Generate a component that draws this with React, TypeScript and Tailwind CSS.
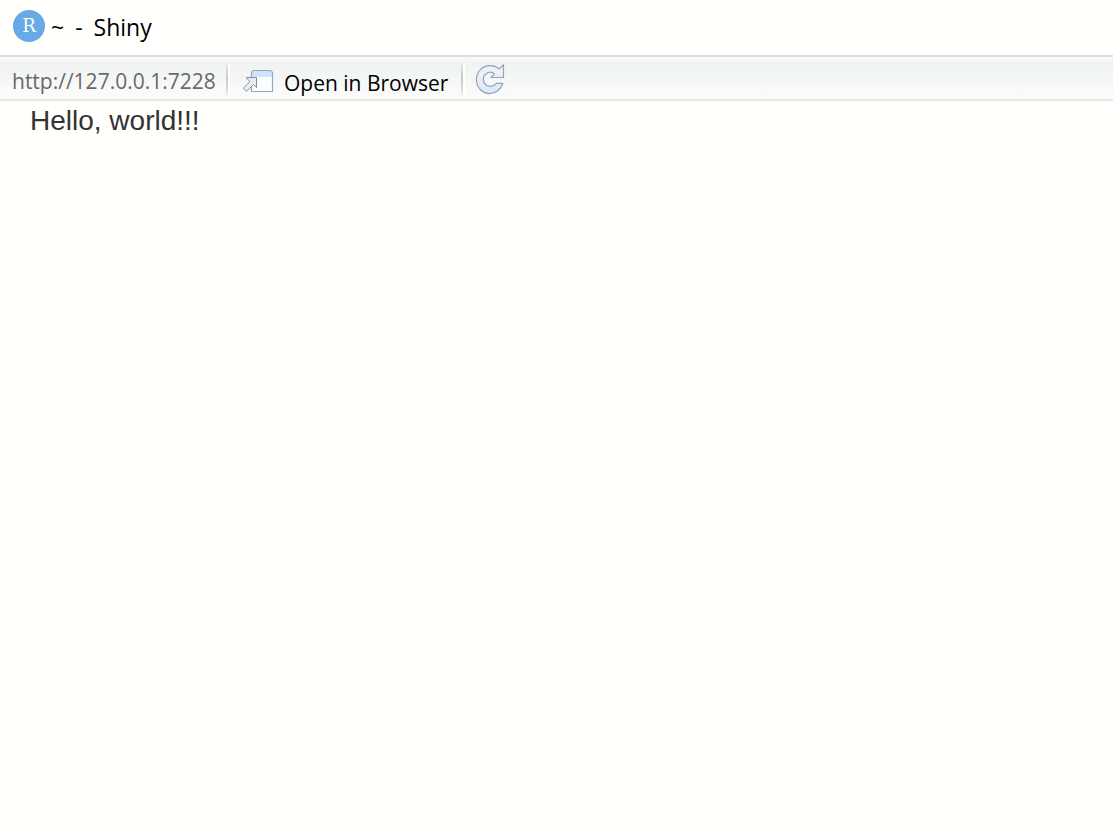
function RLogo() {
  return (
    <span className="flex size-8 items-center justify-center rounded-full bg-[#68a9e6] font-['DejaVu_Serif',serif] text-[18px] leading-8 text-white">
      R
    </span>
  );
}

function OpenWindowIcon() {
  return (
    <svg width="32" height="32" viewBox="0 -6 32 32" fill="none" aria-hidden="true">
      <path d="M9.5 4.5 Q9.5 1.5 12.5 1.5 H27.5 Q30.5 1.5 30.5 4.5 V22.5 H9.5 Z" fill="#fbfcfe" />
      <path d="M10 8 V4.5 Q10 2 12.5 2 H27.5 Q30 2 30 4.5 V8 Z" fill="#cbe5fc" />
      <path
        d="M9.5 22.5 V4.5 Q9.5 1.5 12.5 1.5 H27.5 Q30.5 1.5 30.5 4.5 V22.5 Z"
        stroke="#94aabb"
        strokeWidth="1.2"
      />
      <path
        d="M4.5 8.5 H14.5 V18.5 L11.5 15.5 L4.5 22.3 L1.3 19.2 L8 12.5 L4.5 9.3 Z"
        fill="#eceef4"
        stroke="#858d97"
        strokeLinejoin="round"
      />
    </svg>
  );
}

function RefreshIcon() {
  return (
    <svg width="30" height="32" viewBox="0 0 30 32" fill="none" aria-hidden="true">
      <defs>
        <linearGradient id="refresh-fill" x1="0" y1="0" x2="0" y2="1">
          <stop offset="0" stopColor="#f1f4f8" />
          <stop offset="1" stopColor="#d9e9fb" />
        </linearGradient>
      </defs>
      <path
        d="M28.5 1.8 V14.5 H16 L19.3 10.8 C17 8.9 13.5 8.8 11 10.8 C7.7 13.3 7.5 18.3 10 21 C13 24.5 18.5 24.2 21.3 20.3 H27.9 C26 26.5 20.5 30.7 14.5 30.6 C7 30.3 1.3 24 1.4 16.5 C1.5 8.7 7.5 2.6 15 2.6 C18.5 2.6 21.7 3.9 24.1 5.9 Z"
        fill="url(#refresh-fill)"
        stroke="#98a4b4"
        strokeWidth="1.2"
        strokeLinejoin="round"
      />
    </svg>
  );
}

function Divider() {
  return (
    <span
      aria-hidden="true"
      className="h-8 w-1 border-r-2 border-white bg-linear-to-b from-[#e6e9ea] via-[#c6c8c9] to-[#e6e8e9]"
    />
  );
}

export default function App() {
  return (
    <div className="min-h-screen bg-[#fffffc] font-['Open_Sans','Noto_Sans',sans-serif]">
      <header className="flex h-[55px] items-center gap-1.5 px-[13px] pb-1">
        <RLogo />
        <h1 className="flex gap-[11px] pt-0.5 text-[23px] leading-8 text-black">
          <span>~</span> <span>-</span> <span>Shiny</span>
        </h1>
      </header>
      <div
        role="toolbar"
        aria-label="Viewer"
        className="flex h-[46px] items-center border-y-2 border-t-[#dcdddf] border-b-[#e8e8ea] bg-linear-to-b from-[#fafbfb] via-[#eff3f2] via-15% to-[#fcfcfb] pt-0.5 pl-3"
      >
        <span className="w-[214px] pt-1 text-[21px] leading-7 whitespace-nowrap text-[#696969]">
          http://127.0.0.1:7228
        </span>
        <Divider />
        <button type="button" className="ml-3 flex items-center gap-2.5">
          <OpenWindowIcon />
          <span className="w-[167px] pt-2 text-left text-[21px] leading-7 whitespace-nowrap text-black">
            Open in Browser
          </span>
        </button>
        <span className="flex flex-1 items-center gap-2.5 pl-2.5">
          <Divider />
          <button type="button" aria-label="Refresh">
            <RefreshIcon />
          </button>
        </span>
      </div>
      <main className="px-[30px] text-[28px] leading-10 text-[#333333] font-['Liberation_Sans',Arial,sans-serif]">
        Hello, world!!!
      </main>
    </div>
  );
}
